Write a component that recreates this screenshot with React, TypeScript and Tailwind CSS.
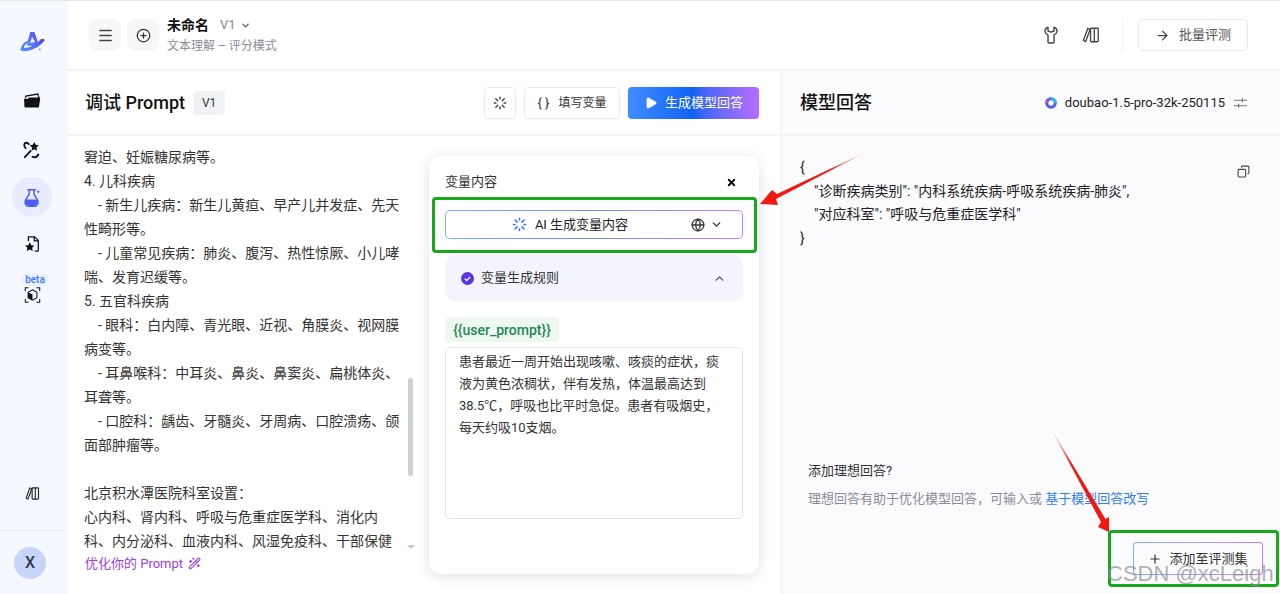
import React from "react";
import { Menu, CirclePlus, ChevronDown, ChevronUp, ArrowRight, Copy, Plus, X, Play, Globe, WandSparkles } from "lucide-react";

const FONT = { fontFamily: 'Roboto, "Noto Sans CJK SC", sans-serif' };

function Burst({ className = "" }: { className?: string }) {
  return (
    <svg viewBox="0 0 16 16" className={className} fill="none" stroke="currentColor" strokeWidth="1.700" strokeLinecap="round">
      <path d="M8 1.500v1.800M8 12.700v1.800M1.500 8h1.800M12.700 8h1.800M3.200 3.200l2.200 2.200M10.600 10.600l2.200 2.200M12.800 3.200l-2.200 2.200M5.400 10.600l-2.200 2.200" />
    </svg>
  );
}

function Books({ className = "" }: { className?: string }) {
  return (
    <svg viewBox="0 0 20 20" className={className} fill="none" stroke="currentColor" strokeWidth="1.500" strokeLinejoin="round">
      <path d="M6.500 2.500 1.500 16l2.500 1.500L9 4z" />
      <rect x="9.500" y="2.500" width="8.500" height="15" rx="0.800" />
      <path d="M13.700 2.500V17.500" />
    </svg>
  );
}

function Logo() {
  return (
    <svg viewBox="0 0 28 24" className="h-[22px] w-[27px]">
      <defs>
        <linearGradient id="lg" x1="0" y1="1" x2="1" y2="0">
          <stop offset="0" stopColor="#4f9bff" />
          <stop offset="1" stopColor="#5b3df0" />
        </linearGradient>
      </defs>
      <path d="M11.500 1h4.500l4.500 12.500c-4 3-9 3.500-13 2z" fill="url(#lg)" />
      <path d="M13.500 6.500l3.500 5.500-5.500 1.200z" fill="#f5f8ff" />
      <path d="M.8 21c.2-4.500 4-9 8-10.500l-.8 2.700C6 15 4.700 16.600 4.500 18.300c6 .5 14-3.500 18.500-9.300 2-.8 4-.3 4.500.8C23 17 8 25 .8 21z" fill="url(#lg)" />
      <circle cx="22" cy="20" r="1" fill="#4f8dff" />
    </svg>
  );
}

function Rail() {
  return (
    <aside className="flex w-[66px] shrink-0 flex-col items-center bg-[#f5f8ff] pr-[2px] shadow-[1px_0_3px_rgba(30,40,80,0.06)]">
      <div className="mt-[30px]"><Logo /></div>
      <svg viewBox="0 0 20 17" className="mt-[40px] h-[15px] w-[18px]">
        <path d="M2.500 5.500 3 3.500 16.500 1.200 18 6" fill="none" stroke="#111" strokeWidth="1.400" />
        <path d="M1 6.500h4.500l1-1.500H18.500a.8.8 0 0 1 .8.900L18 15.300a1.200 1.200 0 0 1-1.200 1H2.600a1.200 1.200 0 0 1-1.200-1z" fill="#111" />
      </svg>
      <svg viewBox="0 0 20 20" className="mt-[33px] h-[18px] w-[18px]">
        <path d="M12.500 1l1.600 3.300 3.400.5-2.500 2.500.6 3.500-3.100-1.700-3 1.700.6-3.500L7.500 4.800l3.400-.5z" fill="#111" />
        <path d="M2 18 8.500 11M2 2.500c2-1 3.500-.5 4.500 1M2 2.500c-.8 1.500-.5 4 1 5.500M10.500 17.500c2 .8 5 .5 6.500-2.500" fill="none" stroke="#111" strokeWidth="2" strokeLinecap="round" />
      </svg>
      <div className="mt-[18px] flex h-10 w-10 items-center justify-center rounded-full bg-[#e9ebff]">
        <svg viewBox="0 0 20 20" className="h-[19px] w-[19px]">
          <path d="M5 1.800h8M6.500 2v4.500L2.800 12.500a4.700 4.700 0 0 0 4 7h4.400a4.700 4.700 0 0 0 4-7L11.500 6.500V2" fill="none" stroke="#4d5cf5" strokeWidth="1.500" strokeLinecap="round" />
          <path d="M3 12h12a5 5 0 0 1-3.500 7h-5A5 5 0 0 1 3 12z" fill="#4d5cf5" />
          <path d="M16 2l.6 1.500L18 4l-1.400.6L16 6l-.6-1.400L14 4l1.400-.5z" fill="#4d5cf5" />
        </svg>
      </div>
      <svg viewBox="0 0 20 20" className="mt-[18px] h-[18px] w-[18px]">
        <path d="M6 7V2h7l4 4v11a1 1 0 0 1-1 1h-3M12.500 2v4.500H17" fill="none" stroke="#111" strokeWidth="1.400" />
        <path d="M7.500 8l1.700 3.300 3.600.5-2.600 2.400.6 3.500-3.300-1.700-3.300 1.700.6-3.500-2.600-2.400 3.600-.5z" fill="#111" />
      </svg>
      <span className="mt-[20px] ml-[6px] rounded-full bg-[#e9f0ff] px-[4px] text-[10px] leading-[13px] font-medium text-[#3d7bff]">beta</span>
      <svg viewBox="0 0 20 20" className="mt-[1px] h-[16px] w-[17px]">
        <path d="M1 5V1h4M15 1h4v4M19 15v4h-4M5 19H1v-4" fill="none" stroke="#111" strokeWidth="1.300" />
        <path d="M10 3.500l5.500 3v7L10 16.500l-5.500-3v-7z" fill="none" stroke="#111" strokeWidth="1.300" />
        <path d="M4.500 6.500l5.500 3v7l-5.500-3z" fill="#111" />
      </svg>
      <Books className="mt-auto mb-[29px] h-[15px] w-[15px] text-[#222]" />
      <div className="flex h-[64px] w-[66px] items-center self-start border-t border-[#e8ebf2] pt-px pl-[14px]">
        <div className="flex h-8 w-8 items-center justify-center rounded-full bg-[#c8d5fa] text-base font-medium text-[#333a4a]">X</div>
      </div>
    </aside>
  );
}

const LEFT_LINES = [
  "　- 产科：妊娠高血压、前置胎盘、胎儿",
  "窘迫、妊娠糖尿病等。",
  "4. 儿科疾病",
  "　- 新生儿疾病：新生儿黄疸、早产儿并发症、先天",
  "性畸形等。",
  "　- 儿童常见疾病：肺炎、腹泻、热性惊厥、小儿哮",
  "喘、发育迟缓等。",
  "5. 五官科疾病",
  "　- 眼科：白内障、青光眼、近视、角膜炎、视网膜",
  "病变等。",
  "　- 耳鼻喉科：中耳炎、鼻炎、鼻窦炎、扁桃体炎、",
  "耳聋等。",
  "　- 口腔科：龋齿、牙髓炎、牙周病、口腔溃疡、颌",
  "面部肿瘤等。",
  "\u00a0",
  "北京积水潭医院科室设置：",
  "心内科、肾内科、呼吸与危重症医学科、消化内",
  "科、内分泌科、血液内科、风湿免疫科、干部保健",
];

function VarCard() {
  return (
    <div className="absolute top-[20px] left-[363px] flex h-[418px] w-[330px] flex-col rounded-xl bg-white px-4 shadow-[0_2px_14px_rgba(30,40,80,0.14)]">
      <div className="mt-[17px] flex h-[18px] items-center justify-between">
        <span className="text-[13px] text-[#333]">变量内容</span>
        <X className="mr-[6px] h-[11px] w-[11px] text-black" strokeWidth={4} />
      </div>
      <div className="mt-[19px] h-[29px] rounded-[5px] bg-gradient-to-r from-[#7ab0ff] via-[#6f8ff5] to-[#c77dff] p-px">
        <div className="relative flex h-full items-center justify-center rounded-[4px] bg-white pr-[48px] text-[13px] text-[#222]">
          <Burst className="mr-[8px] h-[15px] w-[15px] text-[#3d7bff]" />
          <span>AI 生成变量内容</span>
          <div className="absolute right-[19px] flex items-center gap-[5px]">
            <Globe className="h-[14px] w-[14px] text-[#333]" strokeWidth={2.200} />
            <ChevronDown className="h-[13px] w-[13px] text-[#333]" strokeWidth={2.500} />
          </div>
        </div>
      </div>
      <div className="mt-[16px] flex h-[46px] items-center justify-between rounded-[10px] bg-[#f4f4fe] pr-[17px] pl-4">
        <div className="flex items-center gap-[7px]">
          <div className="flex h-[13px] w-[13px] items-center justify-center rounded-full bg-[#5b35e8]">
            <svg viewBox="0 0 10 10" className="h-[9px] w-[9px]"><path d="M2 5.200l2.100 2 3.900-4" fill="none" stroke="#fff" strokeWidth="1.500" /></svg>
          </div>
          <span className="text-[13px] text-[#333]">变量生成规则</span>
        </div>
        <ChevronUp className="h-[13px] w-[13px] text-[#555]" strokeWidth={2.500} />
      </div>
      <div className="mt-[16px] flex h-[25px] w-[114px] items-center justify-center rounded-[5px] bg-[#eef7f0] text-sm font-medium text-[#1f8a50]">{"{{user_prompt}}"}</div>
      <div className="mt-[5px] h-[172px] rounded-[5px] border border-[#e2e4ea] px-[13px] py-[3px] text-[13px] leading-[22px] text-[#333]">
        <div className="whitespace-nowrap">患者最近一周开始出现咳嗽、咳痰的症状，痰</div>
        <div className="whitespace-nowrap">液为黄色浓稠状，伴有发热，体温最高达到</div>
        <div className="whitespace-nowrap">38.5℃，呼吸也比平时急促。患者有吸烟史，</div>
        <div className="whitespace-nowrap">每天约吸10支烟。</div>
      </div>
    </div>
  );
}

function PromptPanel() {
  return (
    <section className="flex w-[714px] shrink-0 flex-col">
      <div className="flex h-[65px] shrink-0 items-center border-b-2 border-[#f3f4f7] pr-[21px] pl-[19px]">
        <span className="text-[18px] font-medium text-[#111]">调试 Prompt</span>
        <span className="ml-[8px] flex h-6 w-8 items-center justify-center rounded bg-[#f1f2f5] text-xs text-[#333]">V1</span>
        <div className="ml-auto flex items-center gap-[8px]">
          <button className="flex h-8 w-8 items-center justify-center rounded border border-[#e8eaf2] bg-white">
            <Burst className="h-[14px] w-[14px] text-[#444]" />
          </button>
          <button className="flex h-8 w-[96px] items-center justify-center gap-[9px] rounded border border-[#e8eaf2] bg-white text-xs text-[#333]">
            <span className="text-[13px] text-[#333]">{"{ }"}</span>
            <span>填写变量</span>
          </button>
          <button className="flex h-8 w-[131px] items-center justify-center gap-[7px] rounded bg-gradient-to-r from-[#3f8cff] via-[#0f62f5] to-[#b56cff] text-[13px] text-white">
            <Play className="h-[14px] w-[14px] fill-white" strokeWidth={1} />
            <span>生成模型回答</span>
          </button>
        </div>
      </div>
      <div className="relative min-h-0 flex-1">
        <div className="mt-[4px] flex h-[413px] w-[338px] flex-col justify-end overflow-hidden pl-[18px]">
          {LEFT_LINES.map((l, i) => (
            <div key={i} className="h-6 shrink-0 whitespace-nowrap text-sm leading-6 text-[#333]">{l}</div>
          ))}
        </div>
        <div className="absolute top-[242px] left-[342px] h-[98px] w-[5px] rounded-full bg-[#cfd0d3]" />
        <div className="absolute top-[409px] left-[341px] h-0 w-0 border-x-[4px] border-t-[4px] border-x-transparent border-t-[#c8c8cc]" />
        <div className="flex items-center gap-[5px] pt-px pl-[19px] text-[13px] text-[#9a3cf0]">
          <span>优化你的 Prompt</span>
          <WandSparkles className="h-[13px] w-[13px]" />
        </div>
        <VarCard />
      </div>
    </section>
  );
}

function AnswerPanel() {
  return (
    <section className="flex min-w-0 flex-1 flex-col border-l-2 border-[#f3f4f7] bg-[#fbfbfe]">
      <div className="flex h-[65px] shrink-0 items-center border-b-2 border-[#f3f4f7] pr-[33px] pl-[18px]">
        <span className="text-[18px] font-medium text-[#111]">模型回答</span>
        <svg viewBox="0 0 14 14" className="mr-[8px] ml-auto h-[12px] w-[12px]">
          <circle cx="7" cy="7" r="5" fill="none" stroke="#4d5cf5" strokeWidth="3.500" />
          <path d="M7 2a5 5 0 0 1 5 5" fill="none" stroke="#27c3d8" strokeWidth="3.500" />
          <path d="M2 7a5 5 0 0 1 3-4.500" fill="none" stroke="#b14df0" strokeWidth="3.500" />
        </svg>
        <span className="text-[13px] text-[#222]">doubao-1.5-pro-32k-250115</span>
        <svg viewBox="0 0 14 12" className="ml-[9px] h-[12px] w-[13px]" fill="none" stroke="#777" strokeWidth="1.200">
          <path d="M0 3h14M9 .8v4.400M0 9h14M5 6.800v4.400" />
        </svg>
      </div>
      <div className="flex min-h-0 flex-1 flex-col">
        <div className="flex justify-between pt-[20px] pr-[30px] pl-[18px]">
          <div className="text-sm leading-[23.500px] text-[#222]">
            <div>{"{"}</div>
            <div className="pl-[14px]">"诊断疾病类别": "内科系统疾病-呼吸系统疾病-肺炎",</div>
            <div className="pl-[14px]">"对应科室": "呼吸与危重症医学科"</div>
            <div>{"}"}</div>
          </div>
          <Copy className="mt-[9px] h-[13px] w-[13px] -scale-x-100 text-[#444]" />
        </div>
        <div className="mt-auto pl-[26px]">
          <div className="text-[13px] text-[#333]">添加理想回答?</div>
          <div className="mt-[8px] text-[13px] text-[#8a8d96]">
            理想回答有助于优化模型回答，可输入或 <span className="text-[#2f7bff]">基于模型回答改写</span>
          </div>
        </div>
        <div className="mt-[34px] mr-[17px] mb-[19px] flex justify-end">
          <div className="h-[33px] w-[130px] rounded bg-gradient-to-r from-[#7ab0ff] to-[#c77dff] p-px">
            <div className="flex h-full items-center justify-center gap-[7px] rounded-[3px] bg-[#fbfbfe] text-[13px] text-[#333]">
              <Plus className="h-[14px] w-[14px]" />
              <span>添加至评测集</span>
            </div>
          </div>
        </div>
      </div>
    </section>
  );
}

function Overlays() {
  return (
    <>
      <div className="absolute top-[196px] left-[432px] h-[56px] w-[325px] rounded-sm border-[3px] border-[#17a81b]" />
      <div className="absolute top-[529px] left-[1108px] h-[57px] w-[171px] rounded-sm border-[3px] border-[#17a81b]" />
      <svg className="pointer-events-none absolute top-[-1px] left-0 h-[594px] w-[1280px]" viewBox="0 0 1280 594">
        <defs>
          <linearGradient id="a1" x1="868" y1="151" x2="760" y2="204" gradientUnits="userSpaceOnUse">
            <stop offset="0" stopColor="#ff5a50" stopOpacity="0.1" />
            <stop offset="0.35" stopColor="#f01810" />
            <stop offset="1" stopColor="#f01810" />
          </linearGradient>
          <linearGradient id="a2" x1="1050" y1="427" x2="1109" y2="532" gradientUnits="userSpaceOnUse">
            <stop offset="0" stopColor="#ff5a50" stopOpacity="0.1" />
            <stop offset="0.35" stopColor="#f01810" />
            <stop offset="1" stopColor="#f01810" />
          </linearGradient>
        </defs>
        <path d="M868 151 L777 194 L772 190 L760 204 L778 205 L776 199 Z" fill="url(#a1)" />
        <path d="M1050 427 L1101 522 L1098 527 L1109 532 L1109 517 L1105.500 519 Z" fill="url(#a2)" />
      </svg>
      <span className="absolute top-[559px] left-[1107px] whitespace-nowrap text-[22px] leading-[28px] text-[#8f8f8f]/70" style={{ fontFamily: '"Liberation Sans", sans-serif' }}>CSDN @xcLeigh</span>
    </>
  );
}

export default function App() {
  return (
    <div className="relative flex h-[594px] w-[1280px] overflow-hidden border-t border-[#e8e8e8] bg-white" style={FONT}>
      <Rail />
      <main className="flex min-w-0 flex-1 flex-col">
        <header className="flex h-[70px] shrink-0 items-center border-b-2 border-[#f3f4f7] pr-[32px] pl-[23px]">
          <div className="flex h-8 w-8 items-center justify-center rounded-lg bg-[#f6f7f9]">
            <Menu className="h-[17px] w-[17px] text-[#444]" />
          </div>
          <div className="ml-[6px] flex h-8 w-8 items-center justify-center rounded-lg bg-[#f6f7f9]">
            <CirclePlus className="h-[15px] w-[15px] text-[#333]" />
          </div>
          <div className="ml-[8px] flex flex-col">
            <div className="flex items-center text-sm leading-[20px]">
              <span className="font-bold text-[#111]">未命名</span>
              <span className="ml-[11px] text-[13px] text-[#888]">V1</span>
              <ChevronDown className="ml-[4px] h-[11px] w-[11px] text-[#555]" strokeWidth={2.500} />
            </div>
            <div className="mt-[3px] text-xs leading-[17px] text-[#8a8d96]">文本理解 – 评分模式</div>
          </div>
          <div className="ml-auto flex items-center">
            <svg viewBox="0 0 14 18" className="h-[18px] w-[14px] text-[#444]" fill="none" stroke="currentColor" strokeWidth="1.400" strokeLinejoin="round">
              <path d="M4 1.200C1.800 2 .8 3.800 1 5.500c.2 1.500 1.400 2.800 3 3.300V16a1 1 0 0 0 1 1h4a1 1 0 0 0 1-1V8.800c1.600-.5 2.800-1.800 3-3.300.2-1.700-.8-3.500-3-4.300V5L7 6.200 4 5z" />
            </svg>
            <Books className="ml-[24px] h-[18px] w-[18px] text-[#444]" />
            <div className="mr-[15px] ml-[22px] h-8 w-px bg-[#f0f1f4]" />
            <div className="flex h-8 w-[110px] items-center justify-center gap-[9px] rounded border border-[#e8eaf0] text-[13px] text-[#555]">
              <ArrowRight className="h-[15px] w-[15px] text-[#444]" />
              <span>批量评测</span>
            </div>
          </div>
        </header>
        <div className="flex min-h-0 flex-1">
          <PromptPanel />
          <AnswerPanel />
        </div>
      </main>
      <Overlays />
    </div>
  );
}
